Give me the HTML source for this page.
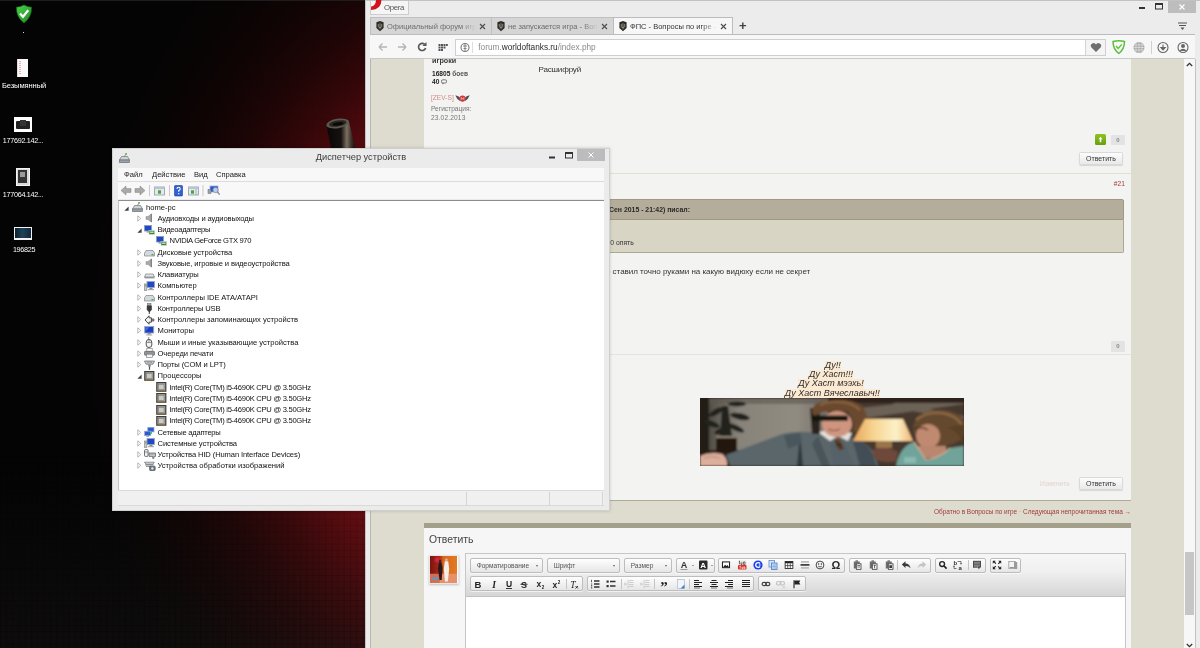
<!DOCTYPE html>
<html lang="ru">
<head>
<meta charset="utf-8">
<title>Desktop</title>
<style>
*{box-sizing:border-box;margin:0;padding:0}
html,body{width:1200px;height:648px;overflow:hidden;background:#000;font-family:"Liberation Sans",sans-serif;}
.abs{position:absolute}
#desk{position:absolute;left:0;top:0;width:1200px;height:648px;overflow:hidden;
 background:
  radial-gradient(ellipse 392px 505px at 480px 345px,#8a1018 0,#7e0e15 28%,#6a0c12 40%,#580a0e 48.500%,#360709 60%,#1e0506 71%,#100404 82%,#080404 92%,#050404 100%);}
#grid{position:absolute;left:0;top:0;width:1200px;height:648px;
 background-image:linear-gradient(rgba(0,0,0,.05) 1px,transparent 1px),linear-gradient(90deg,rgba(0,0,0,.05) 1px,transparent 1px);
 background-size:6.250px 6.250px;}
.dlabel{position:absolute;color:#fff;text-align:center;width:60px;white-space:nowrap;text-shadow:0 0 2px #000,0 1px 1px #000;}
/* ---------- Opera ---------- */
#opera{position:absolute;left:365px;top:0;width:835px;height:648px;background:#ececec;box-shadow:inset 1px 1px 0 #c2c2c2;}
#page{position:absolute;left:5px;top:59px;width:814px;height:589px;background:#dedbcf;overflow:hidden;box-shadow:inset 1px 0 0 #b8b6ae;}
#posts{position:absolute;left:54px;top:0;width:707px;height:441.500px;background:#f3f3f1;border-bottom:1.500px solid #b0ab97;}

/* opera chrome */
#otitle{position:absolute;left:5px;top:1px;width:39px;height:14px;background:#f5f5f5;border:1px solid #cdcdcd;border-top:none;font-size:7.800px;letter-spacing:-.35px;color:#555;line-height:14.500px;padding-left:13px;}
#ologo{position:absolute;left:-.500px;top:-1px;}
.wbtn{position:absolute;}
#oclose{left:803px;top:1px;width:28px;height:12px;background:#bdbdbd;}
#tabs{position:absolute;left:5px;top:17px;width:825px;height:18px;}
.tab{position:absolute;top:0;height:18px;background:#d5d5d5;border:1px solid #bfbfbf;border-bottom:none;font-size:7.500px;line-height:17px;color:#6c6c6c;white-space:nowrap;overflow:hidden;padding-left:16px;}
.tab.act{background:#f7f7f7;color:#333;border-color:#bcbcbc;height:19px;}
.tab .fav{position:absolute;left:4.500px;top:3px;}

.tab .fade{position:absolute;right:0;top:0;width:30px;height:17px;}
.tab .x{position:absolute;right:5px;top:5px;width:7px;height:7px;}
#nav{position:absolute;left:5px;top:34px;width:825px;height:25px;background:#f7f7f7;border-top:1px solid #bcbcbc;border-bottom:1px solid #c9c9c9;}
#addr{position:absolute;left:85px;top:4px;width:651px;height:17px;background:#fff;border:1px solid #cfcfcf;font-size:8.250px;line-height:15px;color:#8a8a8a;padding-left:22.300px;white-space:nowrap;}
#addr b{font-weight:normal;color:#2a2a2a;}
#heart{position:absolute;right:0;top:0;width:20px;height:15px;border-left:1px solid #d4d4d4;background:#f4f4f4;}
#scroll{position:absolute;left:819px;top:59px;width:12px;height:589px;background:#f7f7f7;border-right:1px solid #c2c2c2;}
#thumb{position:absolute;left:1px;top:493px;width:9px;height:63px;background:#c6c6c6;}

/* forum content (screen-absolute coords) */
#fc{position:absolute;left:0;top:0;width:1184px;height:648px;overflow:hidden;pointer-events:none;}
#fc div,#fc span.a{position:absolute;white-space:nowrap;}
.sm{font-size:6.6px;line-height:8px;color:#777;}
.btn{height:13px;border:1px solid #d9d9d9;border-radius:1.500px;background:linear-gradient(#fdfdfd,#e9e9e9);font-size:7px;line-height:11px;color:#333;text-align:center;box-shadow:0 1px 1px rgba(0,0,0,.12);}
.rep{width:14px;height:10.500px;background:#e3e3e3;border-radius:1px;font-size:6px;line-height:10.500px;color:#888;text-align:center;font-weight:bold;}
.sig{font-style:italic;font-size:9px;line-height:9.4px;color:#2c2c2c;background:#fbe9d2;height:9.4px;}
.grp{height:15px;border:1px solid #bdbdbd;border-radius:2px;background:linear-gradient(#fefefe,#e6e6e6);box-shadow:0 1px 0 rgba(255,255,255,.6);}
.grp span{position:absolute;top:0;font-size:6.6px;line-height:13px;color:#555;}
.grp i{position:absolute;top:6px;width:0;height:0;border:1.5px solid transparent;border-top:2px solid #666;}
/* ---------- Device manager ---------- */
#dm{position:absolute;left:112px;top:148px;width:498px;height:363px;background:#ebebeb;border:1px solid #d0d0d0;box-shadow:0 0 3px rgba(0,0,0,.18);}

#dmtitle{position:absolute;left:0;top:0;width:496px;height:19px;text-align:center;font-size:9.250px;line-height:17px;color:#3c3c3c;}
#dmclose{position:absolute;left:464px;top:0;width:28px;height:12px;background:#bcbcbc;}
#dmmenu{position:absolute;left:5px;top:19px;width:486px;height:14px;background:#f8f8f9;border-bottom:1px solid #dcdcdc;font-size:7.6px;line-height:13px;color:#1a1a1a;}
#dmmenu span{position:absolute;top:0;}
#dmtool{position:absolute;left:5px;top:33px;width:486px;height:17px;background:#f8f8f9;}
#dmtree{position:absolute;left:5px;top:51px;width:486px;height:290px;background:#fff;border-top:1px solid #8a8d91;border-left:1px solid #c5c5c5;}
#dmstat{position:absolute;left:5px;top:341px;width:486px;height:16px;background:#f0f0f0;border-top:1px solid #dadada;border-bottom:1px solid #dadada;}
#dmstat i{position:absolute;top:1px;width:1px;height:13px;background:#d4d4d4;}
.tr{position:absolute;left:0;height:11px;font-size:7.6px;line-height:11px;color:#111;white-space:nowrap;}
.tr .t{position:absolute;top:0;}
.tr svg{position:absolute;}
.ex{position:absolute;width:5px;height:7px;}
#dmclose svg,#oclose svg,#heart svg{display:block}
#grid2{position:absolute;left:0;top:0;width:365px;height:648px;background-image:linear-gradient(rgba(0,0,0,.16) 1px,transparent 1px),linear-gradient(90deg,rgba(0,0,0,.16) 1px,transparent 1px);background-size:6.250px 6.250px;-webkit-mask-image:linear-gradient(to bottom,transparent 70%,#000 100%);mask-image:linear-gradient(to bottom,transparent 70%,#000 100%);}
#opera,#fc,#dm,#icons{will-change:transform;}
</style>
</head>
<body>
<div id="desk"><div class="abs" style="left:0;top:0;width:365px;height:648px;background:linear-gradient(to bottom,rgba(210,195,195,0) 0,rgba(210,195,195,0) 72%,rgba(210,195,195,.018) 86%,rgba(210,195,195,.042) 100%)"></div><div id="grid"></div><div id="grid2"></div><div class="abs" style="left:0;top:0;width:365px;height:1px;background:#1e1c1c"></div></div>

<!-- DESKTOP ICONS -->
<div id="icons">
  <svg class="abs" style="left:15px;top:4px" width="18" height="20" viewBox="0 0 18 20"><defs><linearGradient id="sg" x1="0" y1="0" x2="1" y2="1"><stop offset="0" stop-color="#4fd14a"/><stop offset="1" stop-color="#1c8a22"/></linearGradient></defs><path d="M9 1Q12.500 3 16.500 3.200Q17 13 9 19Q1 13 1.500 3.200Q5.500 3 9 1z" fill="url(#sg)" stroke="#0f6a18" stroke-width=".6"/><path d="M5 9.500l3 3.200 5.200-6.500" stroke="#fff" stroke-width="2.200" fill="none"/></svg>
  <div class="abs" style="left:23px;top:31.500px;width:1px;height:1px;background:#ddd"></div>
  <div class="abs" style="left:17px;top:59px;width:11px;height:18px;background:#fafafa;border-left:1px solid #ddd"><div class="abs" style="left:1px;top:2px;width:2px;height:13px;background:repeating-linear-gradient(#e9b0b0 0 1px,#fafafa 1px 2px)"></div></div>
  <div class="dlabel" style="left:-6px;top:81px;font-size:7.600px;letter-spacing:-.12px;line-height:9px">Безымянный</div>
  <div class="abs" style="left:13.500px;top:117px;width:18.500px;height:14.500px;background:#fff"><div class="abs" style="left:2px;top:4px;width:14px;height:8px;background:#222;border-radius:1px"></div><div class="abs" style="left:6px;top:2.500px;width:6px;height:6px;background:#333"></div></div>
  <div class="dlabel" style="left:-7px;top:136px;font-size:7.200px;letter-spacing:-.25px;line-height:9px">177692.142...</div>
  <div class="abs" style="left:15.500px;top:167.500px;width:14px;height:18.500px;background:#d9d9d9;border:1px solid #f4f4f4"><div class="abs" style="left:1.500px;top:1.500px;width:9px;height:12.500px;background:#333"></div><div class="abs" style="left:3.500px;top:3px;width:5px;height:5.500px;background:#9a9a9a"></div></div>
  <div class="dlabel" style="left:-7px;top:189.500px;font-size:7.200px;letter-spacing:-.25px;line-height:9px">177064.142...</div>
  <div class="abs" style="left:13.500px;top:227px;width:18.500px;height:13px;background:#f2f2f2"><div class="abs" style="left:1px;top:1px;width:16.500px;height:9.500px;background:linear-gradient(90deg,#0e1f2e,#1f4258 45%,#12283a)"></div></div>
  <div class="dlabel" style="left:-6px;top:244.500px;font-size:7.200px;letter-spacing:-.3px;line-height:9px">196825</div>
  <!-- gun barrel -->
  <svg class="abs" style="left:322px;top:113px" width="36" height="36" viewBox="0 0 36 36"><defs><linearGradient id="bg1" x1="0" y1="0" x2="1" y2="0"><stop offset="0" stop-color="#0a0807"/><stop offset=".5" stop-color="#14110f"/><stop offset=".7" stop-color="#7d6f60"/><stop offset=".86" stop-color="#3a3129"/><stop offset="1" stop-color="#120e0c"/></linearGradient></defs><path d="M4.500 12L27 8.500l6.500 27.500H9z" fill="url(#bg1)"/><ellipse cx="15.700" cy="10.500" rx="11.500" ry="4.700" transform="rotate(-9 15.700 10.500)" fill="#5c5852"/><ellipse cx="15.700" cy="10.500" rx="8.800" ry="3.100" transform="rotate(-9 15.700 10.500)" fill="#2a2622"/><ellipse cx="16" cy="10.900" rx="5.500" ry="1.700" transform="rotate(-9 15.700 10.500)" fill="#0b0908"/></svg>
</div>

<!-- OPERA WINDOW -->
<div id="opera">
  <div id="otitle"><svg id="ologo" width="11" height="11" viewBox="0 0 11 11"><path d="M10.500 0Q10.300 9.600 0 10.100L.1 6.600Q4.800 5.800 5 0Z" fill="#d3131b"/></svg>Opera</div>
  <div class="wbtn" id="oclose"><svg width="28" height="12" viewBox="0 0 28 12"><path d="M11.500 3.500l5 5M16.500 3.500l-5 5" stroke="#fff" stroke-width="1.100" fill="none"/></svg></div>
  <svg class="abs" style="left:772px;top:2px" width="30" height="10" viewBox="0 0 30 10"><rect x="2" y="5" width="6" height="2" fill="#333"/><rect x="18.5" y="1.5" width="7" height="5.5" fill="none" stroke="#333" stroke-width="1"/><rect x="18" y="1" width="8" height="2" fill="#333"/></svg>
  <svg class="abs" style="left:812.500px;top:22px" width="10" height="9" viewBox="0 0 10 9"><path d="M0 1h9M1 3.5h7" stroke="#555" stroke-width="1.1"/><path d="M2.5 5.5h4l-2 2.5z" fill="#555"/></svg>
  <div id="tabs">
    <div class="tab" style="left:0;width:122px"><svg class="fav" viewBox="0 0 8 10.5" width="8" height="10.5"><path d="M4 0L7.600 1.300V7L4 10.300.400 7V1.300z" fill="#2d2b27"/><path d="M4 2.200v6M2.300 3v2.300q0 1.300 1.700 1.300t1.700-1.300V3" stroke="#a59c88" stroke-width=".8" fill="none"/></svg>Официальный форум игр<span class="fade" style="background:linear-gradient(90deg,rgba(213,213,213,0),#d5d5d5 50%)"></span><svg class="x" viewBox="0 0 7 7"><path d="M1 1l5 5M6 1L1 6" stroke="#4c4c4c" stroke-width="1.100" fill="none"/></svg></div>
    <div class="tab" style="left:121px;width:123px"><svg class="fav" viewBox="0 0 8 10.5" width="8" height="10.5"><path d="M4 0L7.600 1.300V7L4 10.300.400 7V1.300z" fill="#2d2b27"/><path d="M4 2.200v6M2.300 3v2.300q0 1.300 1.700 1.300t1.700-1.300V3" stroke="#a59c88" stroke-width=".8" fill="none"/></svg>не запускается игра - Воп<span class="fade" style="background:linear-gradient(90deg,rgba(213,213,213,0),#d5d5d5 50%)"></span><svg class="x" viewBox="0 0 7 7"><path d="M1 1l5 5M6 1L1 6" stroke="#4c4c4c" stroke-width="1.100" fill="none"/></svg></div>
    <div class="tab act" style="left:243px;width:120px"><svg class="fav" viewBox="0 0 8 10.5" width="8" height="10.5"><path d="M4 0L7.600 1.300V7L4 10.300.400 7V1.300z" fill="#2d2b27"/><path d="M4 2.200v6M2.300 3v2.300q0 1.300 1.700 1.300t1.700-1.300V3" stroke="#a59c88" stroke-width=".8" fill="none"/></svg>ФПС - Вопросы по игре - <span class="fade" style="background:linear-gradient(90deg,rgba(247,247,247,0),#f7f7f7 50%)"></span><svg class="x" viewBox="0 0 7 7"><path d="M1 1l5 5M6 1L1 6" stroke="#4c4c4c" stroke-width="1.100" fill="none"/></svg></div>
    <div class="abs" style="left:369px;top:1px;font-size:13px;line-height:16px;color:#444;font-weight:bold">+</div>
  </div>
  <div id="nav">
    <svg class="abs" style="left:8px;top:6px" width="70" height="12" viewBox="0 0 70 12">
      <path d="M1 6h8M1 6l3.5-3.5M1 6l3.5 3.5" stroke="#b5b5b5" stroke-width="1.4" fill="none"/>
      <path d="M28 6h-8M28 6l-3.5-3.5M28 6l-3.5 3.5" stroke="#b5b5b5" stroke-width="1.4" fill="none"/>
      <path d="M46.5 3.2A3.6 3.6 0 1 0 47.6 7" stroke="#555" stroke-width="1.6" fill="none"/><path d="M48.5 1v4h-4z" fill="#555"/>
      <g fill="#555"><rect x="60.500" y="3" width="2" height="2"/><rect x="63" y="3" width="2" height="2"/><rect x="65.500" y="3" width="2" height="2"/><rect x="68" y="3" width="1.800" height="2"/><rect x="60.500" y="5.500" width="2" height="2"/><rect x="63" y="5.500" width="2" height="2"/><rect x="65.500" y="5.500" width="2" height="2"/><rect x="60.500" y="8" width="2" height="2"/><rect x="63" y="8" width="2" height="2"/></g>
    </svg>
    <div id="addr">
      <svg class="abs" style="left:3.500px;top:2px" width="14" height="11" viewBox="0 0 14 11"><circle cx="5" cy="5.5" r="4" fill="none" stroke="#777" stroke-width="1.1"/><path d="M3 4h4M3.5 6.5h3M5 2v7" stroke="#777" stroke-width=".9"/><path d="M12.5 0v11" stroke="#ddd" stroke-width="1"/></svg>
      forum.<b>worldoftanks.ru</b>/index.php
      <div id="heart"><svg width="20" height="15" viewBox="0 0 20 15"><path d="M10 12 L5.2 7.2 A2.6 2.6 0 0 1 10 4.6 A2.6 2.6 0 0 1 14.8 7.2 Z" fill="#6e6e6e"/></svg></div>
    </div>
    <svg class="abs" style="left:735.700px;top:4px" width="84" height="17" viewBox="0 0 84 17">
      <path d="M7 2.5 Q13 0.8 18.5 2.5 Q18.5 10 12.8 14.5 Q7 10 7 2.5Z" fill="none" stroke="#5bbf3a" stroke-width="1.5"/><path d="M10 7l2.2 2.5 3.6-4.2" stroke="#5bbf3a" stroke-width="1.3" fill="none"/>
      <circle cx="33" cy="8.5" r="5.5" fill="#a8a8a8"/><path d="M27.5 8.5h11M33 3v11M30 4v9M36 4v9M28 6h10M28 11h10" stroke="#fff" stroke-width=".6" opacity=".8"/>
      <path d="M45.5 2v13" stroke="#d0d0d0" stroke-width="1"/>
      <circle cx="57" cy="8.5" r="5" fill="none" stroke="#666" stroke-width="1.1"/><path d="M57 5.5v4.5M54.8 8.5l2.2 2.5 2.2-2.5z" stroke="#666" stroke-width="1.1" fill="#666"/>
      <circle cx="77" cy="8.5" r="5" fill="none" stroke="#666" stroke-width="1.1"/><circle cx="77" cy="7" r="2" fill="#666"/><path d="M73.3 12q3.7-4.5 7.4 0z" fill="#666"/>
    </svg>
  </div>
  <div id="scroll"><div id="thumb"></div>
    <svg class="abs" style="left:2px;top:3px" width="7" height="5" viewBox="0 0 7 5"><path d="M.8 4l2.7-2.7L6.2 4" stroke="#333" stroke-width="1.3" fill="none"/></svg>
    <svg class="abs" style="left:2px;top:584px" width="7" height="5" viewBox="0 0 7 5"><path d="M.8 1l2.7 2.7L6.2 1" stroke="#333" stroke-width="1.3" fill="none"/></svg>
  </div>
  <div id="page">
    <div id="posts"></div>
  </div>
</div>


<!-- FORUM CONTENT -->
<div id="fc">
  <div style="left:432px;top:55.500px;font-size:7.2px;line-height:9px;font-weight:bold;color:#3a3a3a">игроки</div>
  <div class="sm" style="left:432px;top:70.200px;font-weight:bold;color:#555"><b style="color:#222">16805</b> боев</div>
  <div class="sm" style="left:432px;top:78.400px;font-weight:bold;color:#222">40 <svg width="6" height="6" viewBox="0 0 6 6" style="vertical-align:-1px"><rect x=".5" y=".8" width="5" height="3.2" rx="1.2" fill="none" stroke="#444" stroke-width=".7"/><path d="M1.6 4l-.2 1.5 1.4-1.5" fill="#444"/></svg></div>
  <div class="sm" style="left:431px;top:94px;color:#d08a8a">[ZEV-S]</div>
  <svg class="abs" style="left:455px;top:93px" width="15" height="11" viewBox="0 0 15 11"><path d="M.3 2.200Q3.500 2.800 6 5.500L5 8Q1.500 6 .3 2.200zM14.700 2.200Q11.500 2.800 9 5.500l1 2.500q3.500-2 4.700-5.800z" fill="#4d535b"/><circle cx="7.500" cy="5.600" r="3.100" fill="#d43a34"/><path d="M6.200 6.800V4.600l1.300 1.300 1.300-1.300v2.200" stroke="#f2d6d4" stroke-width=".7" fill="none"/></svg>
  <div class="sm" style="left:431px;top:105px">Регистрация:</div>
  <div class="sm" style="left:431px;top:114px;letter-spacing:.15px">23.02.2013</div>
  <div style="left:538.5px;top:64.400px;font-size:8.100px;letter-spacing:-.2px;line-height:11px;color:#333">Расшифруй</div>

  <div style="left:1095px;top:134px;width:11px;height:11px;border-radius:1.5px;background:linear-gradient(#8fc321,#6a9e10)"><svg style="display:block" width="11" height="11" viewBox="0 0 11 11"><path d="M5.500 2.800L7.500 5.300H6.300v2.900H4.700V5.300H3.500z" fill="#fff"/></svg></div>
  <div class="rep" style="left:1111px;top:134.500px">0</div>
  <div class="btn" style="left:1079px;top:152px;width:44px">Ответить</div>
  <div style="left:424px;top:173px;width:707px;height:1px;background:#e2dfd3"></div>
  <div style="left:606px;top:179px;font-size:7px;line-height:9px;color:#3d55a8">5</div>
  <div style="left:1113.800px;top:179px;font-size:6.600px;line-height:9px;color:#a33a3a">#21</div>

  <div style="left:500px;top:199px;width:624px;height:21px;background:#b5ad9b;border:1px solid #a09883;border-radius:2px 2px 0 0"></div>
  <div style="left:500px;top:220px;width:624px;height:33px;background:#d9d5c5;border:1px solid #aea792;border-top:none;border-radius:0 0 2px 2px"></div>
  <div style="left:609px;top:205px;font-size:6.900px;line-height:9px;font-weight:bold;color:#2c2a26">Сен 2015 - 21:42) писал:</div>
  <div style="left:606.500px;top:237.500px;font-size:6.800px;line-height:9px;color:#333">30 опять</div>
  <div style="left:606px;top:266px;font-size:8px;line-height:11px;color:#333;letter-spacing:-.03px">о ставил точно руками на какую видюху если не секрет</div>

  <div class="rep" style="left:1111px;top:341px">0</div>
  <div style="left:424px;top:354px;width:707px;height:1px;background:#e3e3e0"></div>
  <div class="sig" style="left:824.800px;top:360.500px">Ду!!</div>
  <div class="sig" style="left:809px;top:369.900px">Ду Хаст!!!</div>
  <div class="sig" style="left:798.300px;top:379.300px">Ду Хаст мээхь!</div>
  <div class="sig" style="left:784.800px;top:388.700px">Ду Хаст Вячеславыч!!</div>
  <div id="gif" style="left:700px;top:398px;width:264px;height:68px;background:#2a1d15;overflow:hidden"><svg style="display:block" width="264" height="68" viewBox="0 0 264 68">
<defs><filter id="bl" x="-5%" y="-5%" width="110%" height="110%"><feGaussianBlur stdDeviation=".9"/></filter>
<linearGradient id="wall" x1="0" y1="0" x2="1" y2="0"><stop offset="0" stop-color="#2e2821"/><stop offset=".1" stop-color="#5a554c"/><stop offset=".3" stop-color="#87837a"/><stop offset=".75" stop-color="#918c81"/><stop offset="1" stop-color="#77716a"/></linearGradient>
<linearGradient id="lamp" x1="0" y1="0" x2="1" y2="0"><stop offset="0" stop-color="#e9a85c"/><stop offset=".35" stop-color="#f7d592"/><stop offset=".72" stop-color="#fdf0c8"/><stop offset="1" stop-color="#efb672"/></linearGradient></defs>
<g filter="url(#bl)">
<rect x="0" y="0" width="264" height="68" fill="#33271e"/>
<rect x="0" y="0" width="128" height="53" fill="url(#wall)"/>
<rect x="0" y="0" width="128" height="6" fill="#5c574e" opacity=".6"/>
<rect x="148" y="0" width="116" height="68" fill="#46382d"/>
<path d="M160 10L232 2h32v4L166 20zM196 4l68 14v6L190 8z" fill="#7a7064" opacity=".75"/>
<path d="M148 0h116v5H148z" fill="#2e241c"/>
<rect x="0" y="52" width="90" height="16" fill="#2a1f18"/>
<path d="M58 64h24v4H58z" fill="#9c8c7a"/>
<path d="M0 0h9v56H0z" fill="#241b14"/>
<g fill="#24241f"><ellipse cx="37" cy="6" rx="9" ry="2.500"/><ellipse cx="40" cy="18.500" rx="10" ry="3.200" transform="rotate(12 40 18.500)"/><ellipse cx="36" cy="30" rx="9" ry="2.800" transform="rotate(25 36 30)"/><ellipse cx="16" cy="14" rx="8" ry="3" transform="rotate(-30 16 14)"/><ellipse cx="12" cy="26" rx="8" ry="3" transform="rotate(20 12 26)"/><path d="M22 8l6 0 4 30h-12z"/><ellipse cx="22" cy="33" rx="8" ry="3" transform="rotate(-15 22 33)"/></g>
<rect x="16" y="39" width="21" height="15" rx="1.500" fill="#22170f"/><rect x="16" y="38" width="21" height="2" fill="#8a8072"/>
<path d="M26 57L82 36Q104 31 122 37L150 39Q174 44 178 68H30z" fill="#5a666b"/>
<path d="M100 36l3 32h-6z" fill="#2f383c"/>
<path d="M84 37l16-2 2 10-14 6z" fill="#4a565b"/>
<path d="M118 38l12 30h-8l-10-22z" fill="#48545a"/>
<path d="M134 68L130 46l14-2 10 24z" fill="#55626a"/>
<path d="M152 40q20 4 24 28h-16z" fill="#434e54"/>
<path d="M118 34l12 9 8-5 10 5 4-8-16-4z" fill="#e4e0d8"/>
<path d="M134 41l6 0 4 10-5 2z" fill="#6a4424"/><path d="M135 44l7 3M136 47l7 3" stroke="#221a14" stroke-width="1.200"/>
<path d="M110 10h10v26h-8z" fill="#2a231d"/>
<ellipse cx="137" cy="26" rx="15" ry="13" fill="#cf957f"/>
<path d="M112 14Q112 3 130 3Q150-1 162 8Q170 18 165 30Q158 36 153 33Q156 22 148 14Q132 11 120 15Q117 18 114 18z" fill="#6b4a2e"/>
<path d="M120 7q8-4 18-3 14 0 22 8" stroke="#8a6440" stroke-width="2" fill="none"/>
<rect x="111" y="17.500" width="37" height="5.500" rx="1.500" fill="#17130f"/>
<path d="M128 31q6 3 12 0" stroke="#8a5140" stroke-width="1.200" fill="none"/>
<path d="M165 21h38l10 22h-60z" fill="url(#lamp)"/>
<rect x="176" y="43" width="16" height="7" fill="#9a7448"/>
<path d="M0 58Q10 53 22 56Q28 60 27 68H0z" fill="#dcae9c"/>
<path d="M4 60q8-3 16 0" stroke="#b08070" stroke-width="1" fill="none"/>
<path d="M172 52q14-5 26 2l-2 9q-14 3-22-3z" fill="#6e4a3a"/>
<ellipse cx="240" cy="30" rx="27" ry="18" fill="#65482e"/>
<path d="M216 22q10-9 26-7 14 2 20 12" stroke="#8a6844" stroke-width="2.500" fill="none"/>
<ellipse cx="228" cy="38" rx="12" ry="12" fill="#c08a70"/>
<path d="M246 30q14 2 18 20v-24z" fill="#5a4028"/>
<path d="M214 31q8-3 14 1" stroke="#3a2a20" stroke-width="1.200" fill="none"/>
<path d="M216 48h30v12h-26z" fill="#b98670"/>
<path d="M196 68Q200 48 214 44L226 62Q240 60 250 50L264 48V68z" fill="#70a399"/>
<path d="M214 44l12 18q14-2 24-12" stroke="#c8a890" stroke-width="1.500" fill="none"/>
<path d="M204 59h12v6h-12z" fill="#8cbab0"/>
</g></svg></div>

  <div style="left:1040px;top:479px;font-size:6.600px;line-height:9px;color:#e6d2d2">Изменить</div>
  <div class="btn" style="left:1079px;top:477px;width:44px">Ответить</div>
  <div style="left:818px;top:507px;width:313px;text-align:right;font-size:6.470px;line-height:9px;color:#a13c3c">Обратно в Вопросы по игре <span style="color:#b8a9a0">·</span> Следующая непрочитанная тема →</div>
  <div style="left:424px;top:523px;width:707px;height:4.500px;background:#a39f8a"></div>
  <div style="left:424px;top:527.500px;width:707px;height:121px;background:#f6f6f6"></div>
  <div style="left:429px;top:532.600px;font-size:10.400px;line-height:14px;color:#444">Ответить</div>
  <div id="ava" style="left:429px;top:554.500px;width:29.500px;height:29.500px;background:#fff;border:1px solid #e6e6e6;box-shadow:0 1px 2px rgba(0,0,0,.22)"><svg style="position:absolute;left:.3px;top:.3px;display:block" width="27" height="27" viewBox="0 0 28 28"><defs><linearGradient id="av" x1="0" y1="0" x2="1" y2="0"><stop offset="0" stop-color="#7a1410"/><stop offset=".35" stop-color="#a82a14"/><stop offset=".5" stop-color="#d8681e"/><stop offset="1" stop-color="#e27a22"/></linearGradient><radialGradient id="pk"><stop offset="0" stop-color="#f0205a"/><stop offset="1" stop-color="#f0205a" stop-opacity="0"/></radialGradient><filter id="b2"><feGaussianBlur stdDeviation=".45"/></filter></defs><rect width="28" height="28" fill="url(#av)"/><g filter="url(#b2)"><circle cx="7.500" cy="4" r="4" fill="url(#pk)"/><rect x="0" y="18.500" width="28" height="9.500" fill="#e6906a"/><rect x="0" y="18.500" width="10" height="9.500" fill="#c8604a" opacity=".7"/><path d="M9.300 6.500h2.600l1.200 6-1 12.500h-2.200L8.200 13z" fill="#2a151a"/><circle cx="10.500" cy="5.300" r="1.300" fill="#3a2220"/><path d="M15.300 5.500h3.600l1 8-1.400 13h-3l-1.200-13z" fill="#f4eee8"/><circle cx="17" cy="4" r="1.400" fill="#e2b49c"/><rect x="2" y="22.200" width="6.500" height="2.100" fill="#4aa0d0"/></g></svg></div>
  <div id="ed" style="left:465px;top:553px;width:661px;height:100px;background:#fff;border:1px solid #c6c6c6"></div>
  <div id="edtb" style="left:466px;top:554px;width:659px;height:43px;background:linear-gradient(#f6f6f6,#f0f0f0 40%,#d6d6d6);border-bottom:1px solid #c2c2c2"></div>
  <div id="tbw" style="left:-.6px;top:-.7px;width:0;height:0">
  <div class="grp" style="left:470.75px;top:559px;width:73.25px"><span style="left:5.500px">Форматирование</span><i style="right:4px"></i></div>
  <div class="grp" style="left:547.75px;top:559px;width:73.00px"><span style="left:5.500px">Шрифт</span><i style="right:4px"></i></div>
  <div class="grp" style="left:624.75px;top:559px;width:48.00px"><span style="left:5.500px">Размер</span><i style="right:4px"></i></div>
  <div class="grp" style="left:676.50px;top:559.00px;width:39.25px"></div>
  <svg class="abs" style="left:680.00px;top:560.00px" width="12" height="12" viewBox="0 0 12 12"><text x="5" y="9" font-size="9" font-weight="bold" text-anchor="middle" font-family="Liberation Sans, sans-serif" fill="#333">A</text><path d="M1.500 10.500h7" stroke="#999" stroke-width="1"/></svg>
  <svg class="abs" style="left:699.00px;top:560.00px" width="12" height="12" viewBox="0 0 12 12"><rect x="1" y="1.500" width="8.500" height="9" rx="1" fill="#2a2a2a"/><text x="5.200" y="9.300" font-size="8" font-weight="bold" text-anchor="middle" font-family="Liberation Sans, sans-serif" fill="#fff">A</text></svg>
  <i class="abs" style="left:692.500px;top:565.500px;width:0;height:0;border:1.300px solid transparent;border-top:1.800px solid #555"></i>
  <i class="abs" style="left:711.500px;top:565.500px;width:0;height:0;border:1.300px solid transparent;border-top:1.800px solid #555"></i>
  <div class="grp" style="left:719.00px;top:559.00px;width:126.75px"></div>
  <svg class="abs" style="left:720.50px;top:560.00px" width="12" height="12" viewBox="0 0 12 12"><g transform="translate(0.72 0.72) scale(0.88)"><rect x="2" y="2.5" width="8" height="6.500" fill="#fff" stroke="#222" stroke-width="1.200"/><path d="M2.800 8.200l2.200-2.600 1.500 1.500 1.200-1 1.600 2.100z" fill="#222"/></g></svg>
  <svg class="abs" style="left:737.00px;top:560.00px" width="12" height="12" viewBox="0 0 12 12"><rect x="2" y="1.500" width="8.500" height="4.500" fill="#e6e6e6"/><path d="M3 2.200h1M3.500 2.200v3M5 3.500v2h1v-2M7.500 3h1.500v2.500h-1.500z" stroke="#444" stroke-width=".7" fill="none"/><rect x="2" y="6" width="8.500" height="4.500" rx="1" fill="#e02a20"/><path d="M3.500 7.200h1.500M4.200 7.200v2.600M6 7.800v2h.9v-2M8 7.200v2.600h1v-1.600h-1" stroke="#fff" stroke-width=".6" fill="none"/></svg>
  <svg class="abs" style="left:752.50px;top:560.00px" width="12" height="12" viewBox="0 0 12 12"><circle cx="6" cy="6" r="4.600" fill="#1840f0"/><path d="M8 4.500A2.400 2.400 0 1 0 8 7.500" stroke="#fff" stroke-width="1.400" fill="none"/><path d="M6.800 6h1.800" stroke="#fff" stroke-width="1.100"/></svg>
  <svg class="abs" style="left:768.00px;top:560.00px" width="12" height="12" viewBox="0 0 12 12"><rect x="2" y="1.500" width="5.500" height="6.500" fill="#dbe7f7" stroke="#5b8bd0" stroke-width=".8"/><rect x="4.500" y="4" width="5.500" height="6.500" fill="#c8dcf6" stroke="#4a7cc8" stroke-width=".8"/><path d="M5.500 6h3.500M5.500 7.500h3.500M5.500 9h3.500" stroke="#6b95d4" stroke-width=".6"/></svg>
  <svg class="abs" style="left:783.50px;top:560.00px" width="12" height="12" viewBox="0 0 12 12"><g transform="translate(0.84 0.84) scale(0.86)"><rect x="1.500" y="2" width="9" height="8" fill="#fff" stroke="#222" stroke-width="1"/><rect x="1.500" y="2" width="9" height="2" fill="#222"/><path d="M1.500 6.700h9M4.500 4v6M7.500 4v6" stroke="#222" stroke-width=".8"/></g></svg>
  <svg class="abs" style="left:799.50px;top:560.00px" width="12" height="12" viewBox="0 0 12 12"><rect x="2" y="2" width="8" height="1.800" fill="#bdbdbd"/><rect x="1.500" y="5" width="9" height="1.800" fill="#444"/><rect x="2" y="8" width="8" height="1.800" fill="#bdbdbd"/></svg>
  <svg class="abs" style="left:815.00px;top:560.00px" width="12" height="12" viewBox="0 0 12 12"><circle cx="6" cy="6" r="3.900" fill="#f4f4f4" stroke="#333" stroke-width=".9"/><circle cx="4.600" cy="5" r=".7" fill="#333"/><circle cx="7.400" cy="5" r=".7" fill="#333"/><path d="M4.200 7.200q1.800 1.500 3.600 0" stroke="#333" stroke-width=".8" fill="none"/></svg>
  <svg class="abs" style="left:831.00px;top:560.00px" width="12" height="12" viewBox="0 0 12 12"><text x="6" y="10" font-size="11" font-weight="bold" text-anchor="middle" font-family="Liberation Sans, sans-serif" fill="#2a2a2a">Ω</text></svg>
  <div class="grp" style="left:849.50px;top:559.00px;width:82.00px"></div>
  <svg class="abs" style="left:851.75px;top:560.00px" width="12" height="12" viewBox="0 0 12 12"><path d="M2.800 2.500h6v2H5.200v5H2.800z" fill="#6e6e6e"/><rect x="4.500" y="1.300" width="2.500" height="1.600" fill="#777"/><rect x="5.300" y="4.800" width="4.700" height="5.500" fill="#fff" stroke="#333" stroke-width=".8"/><path d="M6.300 6.500h2.700M6.300 8h2.700" stroke="#333" stroke-width=".7"/></svg>
  <svg class="abs" style="left:867.50px;top:560.00px" width="12" height="12" viewBox="0 0 12 12"><path d="M2.800 2.500h6v2H5.200v5H2.800z" fill="#6e6e6e"/><rect x="4.500" y="1.300" width="2.500" height="1.600" fill="#777"/><rect x="5.300" y="4.800" width="4.700" height="5.500" fill="#fff" stroke="#333" stroke-width=".8"/><path d="M6.500 6.300h2.300M7.600 6.300v3" stroke="#333" stroke-width=".8"/></svg>
  <svg class="abs" style="left:883.50px;top:560.00px" width="12" height="12" viewBox="0 0 12 12"><path d="M2.800 2.500h6v2H5.200v5H2.800z" fill="#6e6e6e"/><rect x="4.500" y="1.300" width="2.500" height="1.600" fill="#777"/><rect x="5.300" y="4.800" width="4.700" height="5.500" fill="#fff" stroke="#333" stroke-width=".8"/><rect x="6.300" y="6.200" width="2.700" height="2.800" fill="#3a3a3a"/></svg>
  <svg class="abs" style="left:901.00px;top:560.00px" width="12" height="12" viewBox="0 0 12 12"><path d="M1.800 5.500L5.500 2.300v2.100q4.200.1 5 4.800-1.700-2.300-5-2.200v2.100z" fill="#3a3a3a"/></svg>
  <svg class="abs" style="left:916.75px;top:560.00px" width="12" height="12" viewBox="0 0 12 12"><path d="M10.200 5.500L6.500 2.300v2.100q-4.200.1-5 4.800 1.700-2.300 5-2.200v2.100z" fill="#c4c4c4"/></svg>
  <div style="left:898.00px;top:561.00px;width:1px;height:10px;background:#c4c4c4"></div>
  <div class="grp" style="left:935.75px;top:559.00px;width:50.75px"></div>
  <svg class="abs" style="left:937.50px;top:560.00px" width="12" height="12" viewBox="0 0 12 12"><g transform="translate(0.60 0.60) scale(0.90)"><circle cx="5" cy="5" r="2.700" fill="none" stroke="#222" stroke-width="1.500"/><path d="M7 7l3 3" stroke="#222" stroke-width="1.800"/></g></svg>
  <svg class="abs" style="left:953.00px;top:560.00px" width="12" height="12" viewBox="0 0 12 12"><text x="1.500" y="6" font-size="6" font-weight="bold" font-family="Liberation Sans, sans-serif" fill="#333">b</text><text x="6.500" y="11" font-size="6" font-weight="bold" font-family="Liberation Sans, sans-serif" fill="#333">a</text><path d="M5.500 2.500h3.500v2M4.500 9.500h-2.500v-2" stroke="#555" stroke-width=".8" fill="none"/><path d="M7.800 4.300h2.400l-1.200 1.400zM.8 7.700h2.400l-1.200-1.400z" fill="#555"/></svg>
  <svg class="abs" style="left:971.80px;top:560.00px" width="12" height="12" viewBox="0 0 12 12"><rect x="2" y="1.800" width="8" height="7" fill="#4a4a4a"/><path d="M3 3.300h6M3 4.800h6M3 6.300h6M3 7.800h4" stroke="#bdbdbd" stroke-width=".6"/><path d="M6.500 7.500l3.500 1.200-1.500.6-.6 1.500z" fill="#222" stroke="#fff" stroke-width=".3"/></svg>
  <div style="left:969.00px;top:561.00px;width:1px;height:10px;background:#c4c4c4"></div>
  <div class="grp" style="left:990.40px;top:559.00px;width:31.60px"></div>
  <svg class="abs" style="left:992.00px;top:560.00px" width="12" height="12" viewBox="0 0 12 12"><path d="M1.800 1.800h3l-1 1 1.500 1.500-.8.800L3 3.600l-1.200 1.200zM10.200 1.800v3l-1-1-1.500 1.500-.8-.8L8.400 3 7.200 1.800zM1.800 10.200v-3l1 1 1.500-1.500.8.800L3.600 9l1.200 1.200zM10.200 10.200h-3l1-1-1.500-1.500.8-.8L9 8.400l1.200-1.200z" fill="#222"/></svg>
  <svg class="abs" style="left:1007.80px;top:560.00px" width="12" height="12" viewBox="0 0 12 12"><rect x="1.800" y="2.500" width="6.500" height="7" fill="#f4f4f4" stroke="#9a9a9a" stroke-width=".8"/><rect x="7" y="3" width="3.200" height="7" fill="#9a9a9a"/><path d="M2.800 8.500h4" stroke="#777" stroke-width=".8"/></svg>
  <div class="grp" style="left:470.75px;top:577.00px;width:113.25px"></div>
  <svg class="abs" style="left:473.00px;top:578.50px" width="12" height="12" viewBox="0 0 12 12"><text x="6" y="10" font-size="9.500" font-weight="bold" text-anchor="middle" font-family="Liberation Sans, sans-serif" fill="#222">B</text></svg>
  <svg class="abs" style="left:488.75px;top:578.50px" width="12" height="12" viewBox="0 0 12 12"><text x="6" y="10" font-size="9.500" font-weight="bold" font-style="italic" text-anchor="middle" font-family="Liberation Serif, serif" fill="#222">I</text></svg>
  <svg class="abs" style="left:504.00px;top:578.50px" width="12" height="12" viewBox="0 0 12 12"><text x="6" y="9" font-size="8.500" font-weight="bold" text-anchor="middle" font-family="Liberation Sans, sans-serif" fill="#222">U</text><path d="M3 10.500h6" stroke="#222" stroke-width=".9"/></svg>
  <svg class="abs" style="left:519.00px;top:578.50px" width="12" height="12" viewBox="0 0 12 12"><text x="6" y="9.800" font-size="9" font-weight="bold" text-anchor="middle" font-family="Liberation Sans, sans-serif" fill="#222">S</text><path d="M2.500 6.300h7" stroke="#222" stroke-width=".9"/></svg>
  <svg class="abs" style="left:535.00px;top:578.50px" width="12" height="12" viewBox="0 0 12 12"><text x="4.800" y="9" font-size="8.500" font-weight="bold" text-anchor="middle" font-family="Liberation Sans, sans-serif" fill="#222">x</text><text x="9" y="11" font-size="4.500" font-weight="bold" text-anchor="middle" font-family="Liberation Sans, sans-serif" fill="#222">2</text></svg>
  <svg class="abs" style="left:551.00px;top:578.50px" width="12" height="12" viewBox="0 0 12 12"><text x="4.800" y="10" font-size="8.500" font-weight="bold" text-anchor="middle" font-family="Liberation Sans, sans-serif" fill="#222">x</text><text x="9" y="5.500" font-size="4.500" font-weight="bold" text-anchor="middle" font-family="Liberation Sans, sans-serif" fill="#222">2</text></svg>
  <svg class="abs" style="left:569.00px;top:578.50px" width="12" height="12" viewBox="0 0 12 12"><text x="5" y="9.500" font-size="9.500" font-style="italic" text-anchor="middle" font-family="Liberation Serif, serif" fill="#222">T</text><path d="M7.500 8l2.500 2.500M10 8l-2.500 2.500" stroke="#222" stroke-width=".9"/></svg>
  <div style="left:567.00px;top:579.50px;width:1px;height:10px;background:#c4c4c4"></div>
  <div class="grp" style="left:587.75px;top:577.00px;width:166.75px"></div>
  <svg class="abs" style="left:590.00px;top:578.50px" width="12" height="12" viewBox="0 0 12 12"><path d="M5 3h5.500M5 6h5.500M5 9h5.500" stroke="#333" stroke-width="1.400"/><path d="M2.500 1.800v2.400M2 6h1.200M2 7.500h1.200M2 9h1.200M2 10h1.200" stroke="#333" stroke-width=".8"/></svg>
  <svg class="abs" style="left:605.50px;top:578.50px" width="12" height="12" viewBox="0 0 12 12"><path d="M5 3.500h5.500M5 8h5.500" stroke="#333" stroke-width="1.500"/><rect x="1.500" y="2.500" width="2.200" height="2.200" fill="#333"/><rect x="1.500" y="7" width="2.200" height="2.200" fill="#333"/></svg>
  <svg class="abs" style="left:624.00px;top:578.50px" width="12" height="12" viewBox="0 0 12 12"><path d="M6 2.500h4.500M6 4.500h4.500M6 6.500h4.500M6 8.500h4.500M5 1.800v8.400" stroke="#c8c8c8" stroke-width=".9"/><path d="M4 6L1.500 4.300v3.400z" fill="#c8c8c8"/></svg>
  <svg class="abs" style="left:639.75px;top:578.50px" width="12" height="12" viewBox="0 0 12 12"><path d="M6 2.500h4.500M6 4.500h4.500M6 6.500h4.500M6 8.500h4.500M5 1.800v8.400" stroke="#c8c8c8" stroke-width=".9"/><path d="M1.500 6L4 4.300v3.400z" fill="#c8c8c8" transform="rotate(180 2.750 6)"/></svg>
  <svg class="abs" style="left:658.75px;top:578.50px" width="12" height="12" viewBox="0 0 12 12"><text x="6" y="13.500" font-size="15" font-weight="bold" text-anchor="middle" font-family="Liberation Serif, serif" fill="#222">”</text></svg>
  <svg class="abs" style="left:675.50px;top:578.50px" width="12" height="12" viewBox="0 0 12 12"><rect x="2.500" y="1.500" width="7" height="9" fill="#f2f6fc" stroke="#a8b8d0" stroke-width=".7"/><path d="M9.500 6.500v4h-4z" fill="#4a7fd0"/></svg>
  <svg class="abs" style="left:692.50px;top:578.50px" width="12" height="12" viewBox="0 0 12 12"><path d="M2 2.500h5M2 4.500h8M2 6.500h5M2 8.500h8" stroke="#222" stroke-width="1"/><path d="M2 10h6" stroke="#222" stroke-width=".6"/></svg>
  <svg class="abs" style="left:708.75px;top:578.50px" width="12" height="12" viewBox="0 0 12 12"><path d="M3.500 2.500h5M2 4.500h8M3.500 6.500h5M2 8.500h8" stroke="#222" stroke-width="1"/><path d="M3 10h6" stroke="#222" stroke-width=".6"/></svg>
  <svg class="abs" style="left:724.00px;top:578.50px" width="12" height="12" viewBox="0 0 12 12"><path d="M5 2.500h5M2 4.500h8M5 6.500h5M2 8.500h8" stroke="#222" stroke-width="1"/><path d="M4 10h6" stroke="#222" stroke-width=".6"/></svg>
  <svg class="abs" style="left:740.50px;top:578.50px" width="12" height="12" viewBox="0 0 12 12"><path d="M2 2.500h8M2 4.500h8M2 6.500h8M2 8.500h8" stroke="#222" stroke-width="1.100"/></svg>
  <div style="left:621.50px;top:579.50px;width:1px;height:10px;background:#c4c4c4"></div>
  <div style="left:655.00px;top:579.50px;width:1px;height:10px;background:#c4c4c4"></div>
  <div style="left:689.75px;top:579.50px;width:1px;height:10px;background:#c4c4c4"></div>
  <div class="grp" style="left:758.50px;top:577.00px;width:48.00px"></div>
  <svg class="abs" style="left:760.50px;top:578.50px" width="12" height="12" viewBox="0 0 12 12"><g transform="translate(0.90 0.90) scale(0.85)"><rect x="1.500" y="4" width="5" height="4" rx="2" fill="none" stroke="#444" stroke-width="1.400"/><rect x="5.500" y="4" width="5" height="4" rx="2" fill="none" stroke="#444" stroke-width="1.400"/></g></svg>
  <svg class="abs" style="left:776.00px;top:578.50px" width="12" height="12" viewBox="0 0 12 12"><rect x="1.500" y="3.500" width="4.500" height="3.500" rx="1.700" fill="none" stroke="#c4c4c4" stroke-width="1.200"/><rect x="5" y="3.500" width="4.500" height="3.500" rx="1.700" fill="none" stroke="#c4c4c4" stroke-width="1.200"/><path d="M7.500 8l2.500 2.500M10 8l-2.500 2.500" stroke="#c8c8c8" stroke-width=".9"/></svg>
  <svg class="abs" style="left:792.00px;top:578.50px" width="12" height="12" viewBox="0 0 12 12"><g transform="translate(0.90 0.90) scale(0.85)"><path d="M2.500 1.500v9.500" stroke="#222" stroke-width="1.300"/><path d="M3 2h7l-1.500 2.300L10 6.500H3z" fill="#222"/></g></svg>
  </div>
</div>

<!-- DEVICE MANAGER -->
<div id="dm">
  <div id="dmtitle">Диспетчер устройств</div>
  <div class="abs" style="left:6px;top:3.500px;line-height:0"><svg style="display:block" width="11" height="10" viewBox="0 0 11 10"><path d="M5.5 3.5L7 .5" stroke="#777" stroke-width=".8"/><rect x="6.2" y="0" width="1.8" height="1.8" fill="#6c4"/><path d="M2.5 3.5h6l2 3.5H.5z" fill="#cfd3d6" stroke="#70767c" stroke-width=".7"/><rect x=".5" y="7" width="10" height="2.6" fill="#9aa1a8" stroke="#5e656c" stroke-width=".6"/></svg></div>
  <div id="dmclose"><svg width="28" height="12" viewBox="0 0 28 12"><path d="M11.500 3.500l5 5M16.500 3.500l-5 5" stroke="#fff" stroke-width="1" fill="none"/></svg></div>
  <svg class="abs" style="left:434px;top:2px" width="30" height="10" viewBox="0 0 30 10"><rect x="2" y="5.5" width="6" height="2" fill="#333"/><rect x="18.5" y="1.5" width="7" height="5.5" fill="none" stroke="#333" stroke-width="1"/><rect x="18" y="1" width="8" height="2" fill="#333"/></svg>
  <div id="dmmenu"><span style="left:6px">Файл</span><span style="left:34px">Действие</span><span style="left:76px">Вид</span><span style="left:98px">Справка</span></div>
  <div id="dmtool">
    <svg class="abs" style="left:2px;top:2px" width="105" height="13" viewBox="0 0 105 13">
      <path d="M1 6.5L6 2v2.6h5v3.8H6V11z" fill="#a9a9a9" stroke="#8c8c8c" stroke-width=".6"/>
      <path d="M25 6.5L20 2v2.6h-5v3.8h5V11z" fill="#a9a9a9" stroke="#8c8c8c" stroke-width=".6"/>
      <path d="M29.5 1v11M49.5 1v11M83 1v11" stroke="#c9c9c9" stroke-width="1"/>
      <rect x="34.5" y="3" width="10" height="8" fill="#e4e9ef" stroke="#8d99a8" stroke-width=".8"/><rect x="34.5" y="3" width="10" height="2" fill="#b8c4d4"/><path d="M38 6.3h3v3.4h-3z" fill="#45a83a"/>
      <rect x="54.5" y="1.5" width="8" height="10.5" rx=".8" fill="#2f5fd0" stroke="#1b3c98" stroke-width=".6"/><path d="M57 5q0-1.7 1.6-1.7T60.2 5q0 1-1.5 1.6v1.2M58.7 9v1.2" stroke="#fff" stroke-width="1.1" fill="none"/>
      <rect x="68.5" y="3" width="10" height="8" fill="#e4e9ef" stroke="#8d99a8" stroke-width=".8"/><rect x="68.5" y="3" width="10" height="2" fill="#b8c4d4"/><path d="M71 6.3h3v3.4h-3z" fill="#45a83a"/><path d="M76 5v6" stroke="#8d99a8" stroke-width=".7"/>
      <rect x="90" y="2" width="8" height="6" fill="#2456d6" stroke="#9bb0d8" stroke-width=".8"/><rect x="88" y="5.5" width="3" height="4" fill="#9aa5ae" stroke="#5c666e" stroke-width=".5"/><circle cx="95.5" cy="6" r="2.6" fill="#dfe9f5" fill-opacity=".8" stroke="#7d8790" stroke-width=".8"/><path d="M97.4 8l2.3 2.6" stroke="#7d8790" stroke-width="1.3"/>
    </svg>
  </div>
  <div id="dmtree">
    <div class="tr" style="top:0.70px"><svg class="ex" style="left:5px;top:3px" width="5" height="6" viewBox="0 0 5 6"><path d="M4.6 1v4.2H.4z" fill="#404040"/></svg><svg style="left:13px;top:0.5px" width="11" height="10" viewBox="0 0 11 10"><path d="M5.5 3.5L7 .5" stroke="#777" stroke-width=".8"/><rect x="6.2" y="0" width="1.8" height="1.8" fill="#6c4"/><path d="M2.5 3.5h6l2 3.5H.5z" fill="#cfd3d6" stroke="#70767c" stroke-width=".7"/><rect x=".5" y="7" width="10" height="2.6" fill="#9aa1a8" stroke="#5e656c" stroke-width=".6"/></svg><span class="t" style="left:27.0px">home-pc</span></div>
    <div class="tr" style="top:11.94px"><svg class="ex" style="left:18px;top:2px" width="5" height="7" viewBox="0 0 5 7"><path d="M.8.8L3.8 3.5.8 6.2z" fill="#fff" stroke="#a6a6a6" stroke-width=".8"/></svg><svg style="left:25px;top:0.5px" width="10" height="10" viewBox="0 0 10 10"><path d="M2 3.500h2L7.500.800v8.400L4 6.500H2z" fill="#a9a9a9" stroke="#8a8a8a" stroke-width=".5"/><path d="M7.300 1v8" stroke="#6a6a6a" stroke-width=".8"/></svg><span class="t" style="left:38.5px;letter-spacing:-0.12px">Аудиовходы и аудиовыходы</span></div>
    <div class="tr" style="top:23.18px"><svg class="ex" style="left:18px;top:3px" width="5" height="6" viewBox="0 0 5 6"><path d="M4.6 1v4.2H.4z" fill="#404040"/></svg><svg style="left:25px;top:0.5px" width="11" height="10" viewBox="0 0 11 10"><rect x=".5" y=".5" width="7" height="5.5" fill="#1f49c9" stroke="#8a9ab8" stroke-width=".8"/><rect x="2.5" y="6.3" width="3" height="1.2" fill="#888"/><rect x="5" y="5.6" width="5.6" height="3.8" fill="#2d8a3a" stroke="#d8d8d8" stroke-width=".6"/><rect x="6" y="6.6" width="3.6" height="1.2" fill="#dfe9df"/></svg><span class="t" style="left:38.5px;letter-spacing:-0.29px">Видеоадаптеры</span></div>
    <div class="tr" style="top:34.42px"><svg style="left:37px;top:0.5px" width="11" height="10" viewBox="0 0 11 10"><rect x=".5" y=".5" width="7" height="5.5" fill="#1f49c9" stroke="#8a9ab8" stroke-width=".8"/><rect x="2.5" y="6.3" width="3" height="1.2" fill="#888"/><rect x="5" y="5.6" width="5.6" height="3.8" fill="#2d8a3a" stroke="#d8d8d8" stroke-width=".6"/><rect x="6" y="6.6" width="3.6" height="1.2" fill="#dfe9df"/></svg><span class="t" style="left:50.5px;letter-spacing:-0.34px">NVIDIA GeForce GTX 970</span></div>
    <div class="tr" style="top:45.66px"><svg class="ex" style="left:18px;top:2px" width="5" height="7" viewBox="0 0 5 7"><path d="M.8.8L3.8 3.5.8 6.2z" fill="#fff" stroke="#a6a6a6" stroke-width=".8"/></svg><svg style="left:25px;top:0.5px" width="11" height="10" viewBox="0 0 11 10"><path d="M2 3.5h7l1.5 2.5v3H.5V6z" fill="#d6d9dc" stroke="#7d848b" stroke-width=".7"/><rect x="7.5" y="7" width="2" height="1.3" fill="#4a4"/></svg><span class="t" style="left:38.5px;letter-spacing:-0.06px">Дисковые устройства</span></div>
    <div class="tr" style="top:56.90px"><svg class="ex" style="left:18px;top:2px" width="5" height="7" viewBox="0 0 5 7"><path d="M.8.8L3.8 3.5.8 6.2z" fill="#fff" stroke="#a6a6a6" stroke-width=".8"/></svg><svg style="left:25px;top:0.5px" width="10" height="10" viewBox="0 0 10 10"><path d="M2 3.500h2L7.500.800v8.400L4 6.500H2z" fill="#a9a9a9" stroke="#8a8a8a" stroke-width=".5"/><path d="M7.300 1v8" stroke="#6a6a6a" stroke-width=".8"/></svg><span class="t" style="left:38.5px;letter-spacing:-0.10px">Звуковые, игровые и видеоустройства</span></div>
    <div class="tr" style="top:68.14px"><svg class="ex" style="left:18px;top:2px" width="5" height="7" viewBox="0 0 5 7"><path d="M.8.8L3.8 3.5.8 6.2z" fill="#fff" stroke="#a6a6a6" stroke-width=".8"/></svg><svg style="left:25px;top:0.5px" width="11" height="10" viewBox="0 0 11 10"><path d="M1.8 4h7.4l1.3 3H.5z" fill="#e2e4e6" stroke="#767c82" stroke-width=".7"/><rect x=".5" y="7" width="10" height="1.4" fill="#8e959c"/></svg><span class="t" style="left:38.5px;letter-spacing:-0.12px">Клавиатуры</span></div>
    <div class="tr" style="top:79.38px"><svg class="ex" style="left:18px;top:2px" width="5" height="7" viewBox="0 0 5 7"><path d="M.8.8L3.8 3.5.8 6.2z" fill="#fff" stroke="#a6a6a6" stroke-width=".8"/></svg><svg style="left:25px;top:0.5px" width="11" height="10" viewBox="0 0 11 10"><rect x="3" y=".5" width="7.5" height="6" fill="#1f49c9" stroke="#9aa8c4" stroke-width=".8"/><rect x="5.5" y="6.8" width="3" height="1.2" fill="#888"/><rect x="4" y="8" width="6" height="1.2" fill="#aaa"/><rect x=".5" y="3" width="2.4" height="6.4" fill="#c8ccd0" stroke="#777" stroke-width=".6"/><rect x="1" y="4.4" width="1.4" height=".9" fill="#4a4"/></svg><span class="t" style="left:38.5px">Компьютер</span></div>
    <div class="tr" style="top:90.62px"><svg class="ex" style="left:18px;top:2px" width="5" height="7" viewBox="0 0 5 7"><path d="M.8.8L3.8 3.5.8 6.2z" fill="#fff" stroke="#a6a6a6" stroke-width=".8"/></svg><svg style="left:25px;top:0.5px" width="11" height="10" viewBox="0 0 11 10"><path d="M2 3.5h7l1.5 2.5v3H.5V6z" fill="#d6d9dc" stroke="#7d848b" stroke-width=".7"/><rect x="7.5" y="7" width="2" height="1.3" fill="#4a4"/></svg><span class="t" style="left:38.5px">Контроллеры IDE ATA/ATAPI</span></div>
    <div class="tr" style="top:101.86px"><svg class="ex" style="left:18px;top:2px" width="5" height="7" viewBox="0 0 5 7"><path d="M.8.8L3.8 3.5.8 6.2z" fill="#fff" stroke="#a6a6a6" stroke-width=".8"/></svg><svg style="left:25px;top:0.5px" width="10" height="11" viewBox="0 0 10 11"><rect x="3.5" y="0" width="3.5" height="2.5" fill="#aaa" stroke="#555" stroke-width=".5"/><path d="M2.8 2.5h5v4.3L5.3 9.5 2.8 6.8z" fill="#3a3a3a"/><path d="M5.3 9v2" stroke="#444" stroke-width="1"/></svg><span class="t" style="left:38.5px;letter-spacing:-0.15px">Контроллеры USB</span></div>
    <div class="tr" style="top:113.10px"><svg class="ex" style="left:18px;top:2px" width="5" height="7" viewBox="0 0 5 7"><path d="M.8.8L3.8 3.5.8 6.2z" fill="#fff" stroke="#a6a6a6" stroke-width=".8"/></svg><svg style="left:25px;top:0.5px" width="11" height="10" viewBox="0 0 11 10"><path d="M5 .8L1 5l4 4.2V7.2h2.4V2.8H5z" fill="#f2f2f2" stroke="#444" stroke-width="1"/><path d="M7.2 5h3.4M9 3.3v3.4" stroke="#444" stroke-width="1"/></svg><span class="t" style="left:38.5px">Контроллеры запоминающих устройств</span></div>
    <div class="tr" style="top:124.34px"><svg class="ex" style="left:18px;top:2px" width="5" height="7" viewBox="0 0 5 7"><path d="M.8.8L3.8 3.5.8 6.2z" fill="#fff" stroke="#a6a6a6" stroke-width=".8"/></svg><svg style="left:25px;top:0.5px" width="11" height="10" viewBox="0 0 11 10"><rect x=".7" y=".5" width="9" height="6.5" fill="#1a3fc0" stroke="#9aa8c4" stroke-width=".9"/><path d="M1.5 1.3h4l-4 4z" fill="#4a72e8"/><rect x="3.6" y="7.3" width="3.2" height="1.1" fill="#777"/><rect x="2.2" y="8.4" width="6" height="1.1" fill="#aaa"/></svg><span class="t" style="left:38.5px">Мониторы</span></div>
    <div class="tr" style="top:135.58px"><svg class="ex" style="left:18px;top:2px" width="5" height="7" viewBox="0 0 5 7"><path d="M.8.8L3.8 3.5.8 6.2z" fill="#fff" stroke="#a6a6a6" stroke-width=".8"/></svg><svg style="left:25px;top:0.5px" width="10" height="11" viewBox="0 0 10 11"><path d="M5 0q-1 1.2 0 2.4" stroke="#555" stroke-width=".7" fill="none"/><path d="M2.2 5.5Q2.2 2.4 5 2.4T7.8 5.5V8Q7.8 10.5 5 10.5T2.2 8z" fill="#f4f4f4" stroke="#444" stroke-width=".9"/><path d="M5 2.4v3M2.2 5.5h5.6" stroke="#555" stroke-width=".6"/></svg><span class="t" style="left:38.5px">Мыши и иные указывающие устройства</span></div>
    <div class="tr" style="top:146.82px"><svg class="ex" style="left:18px;top:2px" width="5" height="7" viewBox="0 0 5 7"><path d="M.8.8L3.8 3.5.8 6.2z" fill="#fff" stroke="#a6a6a6" stroke-width=".8"/></svg><svg style="left:25px;top:0.5px" width="11" height="10" viewBox="0 0 11 10"><rect x="2.8" y=".5" width="5.4" height="3" fill="#fff" stroke="#777" stroke-width=".6"/><rect x=".5" y="3.3" width="10" height="4" rx=".8" fill="#8e9398" stroke="#555" stroke-width=".6"/><rect x="2.5" y="6.2" width="6" height="3.2" fill="#f3f3f3" stroke="#777" stroke-width=".6"/></svg><span class="t" style="left:38.5px;letter-spacing:-0.08px">Очереди печати</span></div>
    <div class="tr" style="top:158.06px"><svg class="ex" style="left:18px;top:2px" width="5" height="7" viewBox="0 0 5 7"><path d="M.8.8L3.8 3.5.8 6.2z" fill="#fff" stroke="#a6a6a6" stroke-width=".8"/></svg><svg style="left:25px;top:0.5px" width="11" height="10" viewBox="0 0 11 10"><path d="M.5 1h10L9 4.2H2z" fill="#c9cdd1" stroke="#666" stroke-width=".7"/><path d="M3 2.2h5" stroke="#555" stroke-width=".7" stroke-dasharray=".8 .6"/><rect x="4.3" y="4.2" width="2.4" height="2.5" fill="#888"/><path d="M5.5 6.5v3.3" stroke="#555" stroke-width="1.2"/></svg><span class="t" style="left:38.5px;letter-spacing:-0.10px">Порты (COM и LPT)</span></div>
    <div class="tr" style="top:169.30px"><svg class="ex" style="left:18px;top:3px" width="5" height="6" viewBox="0 0 5 6"><path d="M4.6 1v4.2H.4z" fill="#404040"/></svg><svg style="left:25px;top:0.5px" width="11" height="10" viewBox="0 0 11 10"><rect x=".8" y=".6" width="9" height="8.6" fill="#a7a9a6" stroke="#3c3c3a" stroke-width="1.2"/><rect x="2.6" y="2.3" width="5.4" height="5.2" fill="#c9cbc8" stroke="#77715f" stroke-width=".5"/><path d="M1 9.3h9" stroke="#8a6d2e" stroke-width=".8"/></svg><span class="t" style="left:38.5px">Процессоры</span></div>
    <div class="tr" style="top:180.54px"><svg style="left:37px;top:0.5px" width="11" height="10" viewBox="0 0 11 10"><rect x=".8" y=".6" width="9" height="8.6" fill="#a7a9a6" stroke="#3c3c3a" stroke-width="1.2"/><rect x="2.6" y="2.3" width="5.4" height="5.2" fill="#c9cbc8" stroke="#77715f" stroke-width=".5"/><path d="M1 9.3h9" stroke="#8a6d2e" stroke-width=".8"/></svg><span class="t" style="left:50.5px;letter-spacing:-0.27px">Intel(R) Core(TM) i5-4690K CPU @ 3.50GHz</span></div>
    <div class="tr" style="top:191.78px"><svg style="left:37px;top:0.5px" width="11" height="10" viewBox="0 0 11 10"><rect x=".8" y=".6" width="9" height="8.6" fill="#a7a9a6" stroke="#3c3c3a" stroke-width="1.2"/><rect x="2.6" y="2.3" width="5.4" height="5.2" fill="#c9cbc8" stroke="#77715f" stroke-width=".5"/><path d="M1 9.3h9" stroke="#8a6d2e" stroke-width=".8"/></svg><span class="t" style="left:50.5px;letter-spacing:-0.27px">Intel(R) Core(TM) i5-4690K CPU @ 3.50GHz</span></div>
    <div class="tr" style="top:203.02px"><svg style="left:37px;top:0.5px" width="11" height="10" viewBox="0 0 11 10"><rect x=".8" y=".6" width="9" height="8.6" fill="#a7a9a6" stroke="#3c3c3a" stroke-width="1.2"/><rect x="2.6" y="2.3" width="5.4" height="5.2" fill="#c9cbc8" stroke="#77715f" stroke-width=".5"/><path d="M1 9.3h9" stroke="#8a6d2e" stroke-width=".8"/></svg><span class="t" style="left:50.5px;letter-spacing:-0.27px">Intel(R) Core(TM) i5-4690K CPU @ 3.50GHz</span></div>
    <div class="tr" style="top:214.26px"><svg style="left:37px;top:0.5px" width="11" height="10" viewBox="0 0 11 10"><rect x=".8" y=".6" width="9" height="8.6" fill="#a7a9a6" stroke="#3c3c3a" stroke-width="1.2"/><rect x="2.6" y="2.3" width="5.4" height="5.2" fill="#c9cbc8" stroke="#77715f" stroke-width=".5"/><path d="M1 9.3h9" stroke="#8a6d2e" stroke-width=".8"/></svg><span class="t" style="left:50.5px;letter-spacing:-0.27px">Intel(R) Core(TM) i5-4690K CPU @ 3.50GHz</span></div>
    <div class="tr" style="top:225.50px"><svg class="ex" style="left:18px;top:2px" width="5" height="7" viewBox="0 0 5 7"><path d="M.8.8L3.8 3.5.8 6.2z" fill="#fff" stroke="#a6a6a6" stroke-width=".8"/></svg><svg style="left:25px;top:0.5px" width="11" height="10" viewBox="0 0 11 10"><rect x="3.8" y=".3" width="6.2" height="4.6" fill="#2a58d8" stroke="#9aa8c4" stroke-width=".7"/><rect x=".6" y="4.2" width="6.2" height="4.4" fill="#2a58d8" stroke="#9aa8c4" stroke-width=".7"/><path d="M5.5 5.2l2.4-.4.2 2.4" fill="#3c3"/><rect x="2.2" y="8.8" width="3" height=".9" fill="#888"/></svg><span class="t" style="left:38.5px;letter-spacing:-0.26px">Сетевые адаптеры</span></div>
    <div class="tr" style="top:236.74px"><svg class="ex" style="left:18px;top:2px" width="5" height="7" viewBox="0 0 5 7"><path d="M.8.8L3.8 3.5.8 6.2z" fill="#fff" stroke="#a6a6a6" stroke-width=".8"/></svg><svg style="left:25px;top:0.5px" width="11" height="10" viewBox="0 0 11 10"><rect x="3" y=".5" width="7.5" height="6" fill="#1f49c9" stroke="#9aa8c4" stroke-width=".8"/><rect x="5.5" y="6.8" width="3" height="1.2" fill="#888"/><rect x="4" y="8" width="6" height="1.2" fill="#aaa"/><rect x=".5" y="3" width="2.4" height="6.4" fill="#c8ccd0" stroke="#777" stroke-width=".6"/><rect x="1" y="4.4" width="1.4" height=".9" fill="#4a4"/></svg><span class="t" style="left:38.5px;letter-spacing:-0.10px">Системные устройства</span></div>
    <div class="tr" style="top:247.98px"><svg class="ex" style="left:18px;top:2px" width="5" height="7" viewBox="0 0 5 7"><path d="M.8.8L3.8 3.5.8 6.2z" fill="#fff" stroke="#a6a6a6" stroke-width=".8"/></svg><svg style="left:25px;top:0.5px" width="12" height="10" viewBox="0 0 12 10"><rect x=".5" y=".5" width="3.6" height="7" rx="1.2" fill="#eee" stroke="#555" stroke-width=".8"/><path d="M.5 3h3.6" stroke="#555" stroke-width=".6"/><path d="M5 4h6.5v3.4h-1.6v2h-1.2v-2H5z" fill="#c9ccd0" stroke="#555" stroke-width=".7"/><path d="M5.6 5.2h5" stroke="#666" stroke-width=".6" stroke-dasharray=".8 .5"/></svg><span class="t" style="left:38.5px;letter-spacing:-0.12px">Устройства HID (Human Interface Devices)</span></div>
    <div class="tr" style="top:259.22px"><svg class="ex" style="left:18px;top:2px" width="5" height="7" viewBox="0 0 5 7"><path d="M.8.8L3.8 3.5.8 6.2z" fill="#fff" stroke="#a6a6a6" stroke-width=".8"/></svg><svg style="left:25px;top:0.5px" width="12" height="10" viewBox="0 0 12 10"><path d="M.5 1.2h9.8L8.8 3.2H2z" fill="#dfe2e5" stroke="#60666c" stroke-width=".7"/><path d="M1 3.9h8.8M2 5.4h5" stroke="#60666c" stroke-width=".8"/><rect x="5.6" y="5.2" width="5.6" height="4.3" rx=".7" fill="#6f767d" stroke="#3e4347" stroke-width=".6"/><circle cx="8.4" cy="7.4" r="1.2" fill="#dfe6ee"/></svg><span class="t" style="left:38.5px">Устройства обработки изображений</span></div>
  </div>
  <div id="dmstat"><i style="left:348px"></i><i style="left:431px"></i><i style="left:484px"></i></div>
</div>

</body>
</html>
